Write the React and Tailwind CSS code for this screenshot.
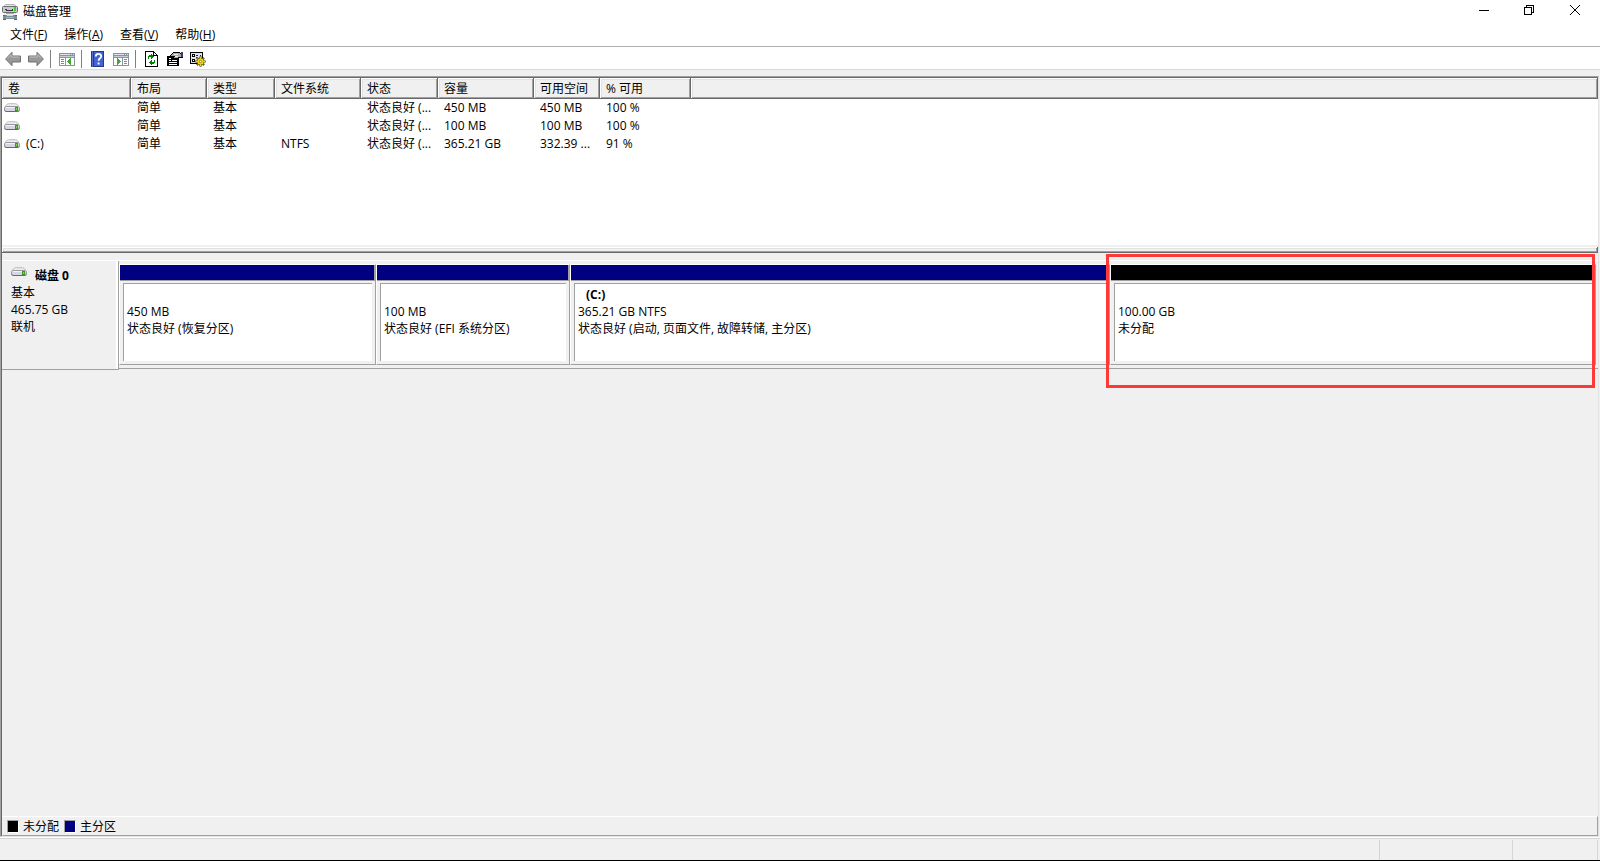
const columns = [
  { label: '卷', width: 'w-[129px]' },
  { label: '布局', width: 'w-[76px]' },
  { label: '类型', width: 'w-[68px]' },
  { label: '文件系统', width: 'w-[86px]' },
  { label: '状态', width: 'w-[77px]' },
  { label: '容量', width: 'w-[96px]' },
  { label: '可用空间', width: 'w-[66px]' },
  { label: '% 可用', width: 'w-[91px]' },
];

const volumes = [
  ['', '简单', '基本', '', '状态良好 (...', '450 MB', '450 MB', '100 %'],
  ['', '简单', '基本', '', '状态良好 (...', '100 MB', '100 MB', '100 %'],
  ['(C:)', '简单', '基本', 'NTFS', '状态良好 (...', '365.21 GB', '332.39 ...', '91 %'],
];

const partitions = [
  { name: '', size: '450 MB', status: '状态良好 (恢复分区)', bar: 'bg-[#000080]' },
  { name: '', size: '100 MB', status: '状态良好 (EFI 系统分区)', bar: 'bg-[#000080]' },
  { name: '(C:)', size: '365.21 GB NTFS', status: '状态良好 (启动, 页面文件, 故障转储, 主分区)', bar: 'bg-[#000080]' },
  { name: '', size: '100.00 GB', status: '未分配', bar: 'bg-black', marked: true },
];

const menus = [
  ['文件', 'F'],
  ['操作', 'A'],
  ['查看', 'V'],
  ['帮助', 'H'],
];

const DriveIcon = () => (
  <svg width="16" height="10" viewBox="0 0 16 10" className="shrink-0">
    <path d="M4 1h8l3 3H1z" fill="#ededee" />
    <path d="M1.5 3Q3 .7 4.5.7h7q1.5 0 3 2.3" fill="none" stroke="#bcbcbe" />
    <path d="M1.5 3.5h13q1 .5 1 1.5v2q0 1.5-1.5 1.5h-12Q.5 8.500 .5 7V5q0-1 1-1.500z" fill="#d6d6e2" stroke="#99999d" />
    <path d="M1 7.500q.5 1 1.500 1h11q1 0 1.500-1" fill="none" stroke="#68686c" />
    <path d="M2 4.500h9" stroke="#f2f2f8" />
    <rect x="11" y="4" width="3" height="4" fill="#3f9a22" />
    <rect x="12" y="5" width="1" height="2" fill="#74dc3c" />
  </svg>
);

const AppIcon = () => (
  <svg width="16" height="16" viewBox="0 0 16 16" className="shrink-0">
    <path d="M3.500.5h9l2.500 3H1z" fill="#e6e6e7" stroke="#b4b4b6" />
    <rect x=".5" y="2.500" width="15" height="6" rx="1" fill="#c9cacc" stroke="#6d7072" />
    <path d="M4 6.500h7M3 5.500h2M10 5.500h1" stroke="#34383a" />
    <rect x="12" y="3" width="2" height="4" fill="#35d51e" />
    <path d="M2 9h12v3H2z" fill="#eceeee" />
    <path d="M4 9.500h8" stroke="#a5a9ac" />
    <rect x="1" y="11" width="14" height="4" fill="#7d9097" />
    <path d="M1 11.500h2M13 11.500h2M1 15.500h3M12 15.500h3" stroke="#56656a" />
    <path d="M5 11.500h6" stroke="#cfd6d8" />
    <path d="M4 13.500h8" stroke="#a9b8bd" />
  </svg>
);

const ArrowIcon = ({ flip }) => (
  <svg width="16" height="16" viewBox="0 0 16 16" className={flip ? '-scale-x-100' : ''}>
    <path d="M.6 8 7 1.300v3.700h8.500v6H7v3.700z" fill="#989898" stroke="#707070" strokeLinejoin="round" />
    <path d="M2.200 7.600 6.200 3.600v2.400h8.300" fill="none" stroke="#bcbcbc" />
  </svg>
);

const PaneIcon = ({ right }) => (
  <svg width="16" height="14" viewBox="0 0 16 14" shapeRendering="crispEdges">
    <path d="M0 1h16v13H0z" fill="#8a93a3" />
    <path d="M1 2h10v1H1zM12 2h1v1h-1zM14 2h1v1h-1z" fill="#dfe4ea" />
    <path d="M1 4h14v1H1z" fill="#c8ced8" />
    {right ? (
      <>
        <path d="M1 6h8v7H1zM10 6h5v7h-5z" fill="#fff" />
        <path d="M11 7h3v1h-3zM11 9h3v1h-3zM11 11h3v1h-3z" fill="#6e8ab5" />
        <path d="M4 6h1v1h1v1h1v1h1v1H7v1H6v1H5v1H4z" fill="#45a832" />
      </>
    ) : (
      <>
        <path d="M1 6h5v7H1zM7 6h8v7H7z" fill="#fff" />
        <path d="M2 7h3v1H2zM2 9h3v1H2zM2 11h3v1H2z" fill="#6e8ab5" />
        <path d="M12 6h-1v1h-1v1H9v1H8v1h1v1h1v1h1v1h1z" fill="#45a832" />
      </>
    )}
  </svg>
);

const HelpIcon = () => (
  <svg width="13" height="16" viewBox="0 0 13 16">
    <rect width="13" height="16" fill="#23399a" />
    <path d="M3 1h9v14H3z" fill="#4164cf" />
    <path d="M1.500 0v16" stroke="#5570c8" />
    <path d="M4.800 5.400c0-3.200 5.400-3.200 5.400-.2 0 2.200-2.600 2-2.600 4.600" fill="none" stroke="#fff" strokeWidth="1.800" />
    <rect x="6.600" y="11.500" width="2" height="2" fill="#fff" />
  </svg>
);

const RefreshIcon = () => (
  <svg width="13" height="16" viewBox="0 0 13 16" shapeRendering="crispEdges">
    <path d="M.5.5h8l4 4v11H.5z" fill="#fff" stroke="#000" />
    <path d="M8.500.5v4h4" fill="none" stroke="#000" />
    <path d="M6 3h1v1h1v1h1v1H8v1H7v1H6V6H4v2H3V5h1V4h2z" fill="#008000" />
    <path d="M7 14H6v-1H5v-1H4v-1h1v-1h1V9h1v2h2V9h1v3H9v1H7z" fill="#008000" />
  </svg>
);

const PropertiesIcon = () => (
  <svg width="16" height="16" viewBox="0 0 16 16" shapeRendering="crispEdges">
    <path d="M0 5h12v10H0z" />
    <path d="M2 7h2v1H2zM5 9h5v1H5zM2 9h2v1H2zM2 11h8v1H2zM2 13h8v1H2z" fill="#fff" />
    <path d="M3 5l4-4h5l1 1h2v4h-3l-2 2-1-1-2 1-1-1 2-2z" fill="#aaa" stroke="#000" />
    <path d="M7 3h4M8 5h3" stroke="#eee" />
    <path d="M14 1h2v5h-2z" fill="#333b70" />
  </svg>
);

const SettingsIcon = () => (
  <svg width="16" height="16" viewBox="0 0 16 16">
    <path d="M.5 1.500h12v11H.5z" fill="#e4e4e4" stroke="#000" shapeRendering="crispEdges" />
    <path d="M2.500 3.500h2v2h-2zM2.500 8.500h2v2h-2z" fill="#fff" stroke="#000" shapeRendering="crispEdges" />
    <path d="M6 4.500h2M10 4.500h1M6 6.500h1" stroke="#222" shapeRendering="crispEdges" />
    <path d="M10.500 5.500v10M5.500 10.500h10M7 7l7 7M14 7l-7 7" stroke="#000" strokeWidth="2" />
    <path d="M10.500 6v9M6 10.500h9M7.500 7.500l6 6M13.500 7.500l-6 6" stroke="#f5d800" strokeWidth="1.300" />
    <circle cx="10.500" cy="10.500" r="2.800" fill="#f5d800" />
    <circle cx="10.500" cy="10.500" r="1.200" fill="#fff" stroke="#5a4d00" strokeWidth=".6" />
  </svg>
);

const ToolButton = ({ label, children }) => (
  <button aria-label={label} className="flex h-full w-[23px] items-center justify-center">
    {children}
  </button>
);

const Separator = () => <span className="mr-1 ml-[3px] h-[18px] w-px bg-[#808080]" />;

const TitleBar = () => (
  <header className="flex h-6 items-center bg-white pl-0.5">
    <AppIcon />
    <h1 className="ml-[5px] flex-1">磁盘管理</h1>
    <div className="flex h-5 items-center self-start pr-0.5">
      <button aria-label="最小化" className="flex w-[45px] justify-center">
        <svg width="10" height="10" shapeRendering="crispEdges"><path d="M0 5.500h10" stroke="#000" /></svg>
      </button>
      <button aria-label="还原" className="flex w-[45px] justify-center">
        <svg width="10" height="10" shapeRendering="crispEdges" fill="none" stroke="#000">
          <path d="M.5 2.500h7v7h-7zM2.500 2.500v-2h7v7h-2" />
        </svg>
      </button>
      <button aria-label="关闭" className="flex w-[47px] justify-center">
        <svg width="10" height="10"><path d="M0 0l10 10M10 0L0 10" stroke="#000" /></svg>
      </button>
    </div>
  </header>
);

const MenuBar = () => (
  <nav className="flex h-[23px] items-center gap-px border-b border-[#b0b0b0] bg-white pl-0.5">
    {menus.map(([label, key]) => (
      <button key={key} className="px-2">
        {label}(<u>{key}</u>)
      </button>
    ))}
  </nav>
);

const Toolbar = () => (
  <div className="flex h-[23px] items-center border-b border-[#d9d9d9] bg-white pt-0.5 pl-px">
    <ToolButton label="后退"><ArrowIcon /></ToolButton>
    <ToolButton label="前进"><ArrowIcon flip /></ToolButton>
    <Separator />
    <ToolButton label="显示/隐藏控制台树"><PaneIcon /></ToolButton>
    <Separator />
    <ToolButton label="帮助"><HelpIcon /></ToolButton>
    <ToolButton label="显示/隐藏操作窗格"><PaneIcon right /></ToolButton>
    <Separator />
    <ToolButton label="刷新"><RefreshIcon /></ToolButton>
    <ToolButton label="属性"><PropertiesIcon /></ToolButton>
    <ToolButton label="设置"><SettingsIcon /></ToolButton>
  </div>
);

const headCell =
  'h-[21px] bg-[#f0f0f0] px-1.5 text-left font-normal shadow-[inset_-1px_-1px_#696969,inset_1px_1px_#fff,inset_-2px_-2px_#a0a0a0,inset_2px_2px_#e3e3e3]';

const VolumeTable = () => (
  <div className="h-[167px] bg-white">
    <table className="w-full table-fixed border-collapse whitespace-nowrap">
      <thead>
        <tr>
          {columns.map((col) => (
            <th key={col.label} className={`${headCell} ${col.width}`}>{col.label}</th>
          ))}
          <td className={headCell} />
        </tr>
      </thead>
      <tbody>
        {volumes.map((row, i) => (
          <tr key={i} className="h-[18px]">
            {row.map((cell, j) => (
              <td key={j} className={j === 0 ? 'pl-0.5' : 'pl-1.5'}>
                {j === 0 ? (
                  <div className="flex items-center gap-1.5"><DriveIcon />{cell}</div>
                ) : cell}
              </td>
            ))}
          </tr>
        ))}
      </tbody>
    </table>
  </div>
);

const Partition = ({ name, size, status, bar, marked }) => (
  <div className="relative flex flex-col border border-t-white border-r-[#a0a0a0] border-b-[#a0a0a0] border-l-white">
    <div className="border-b border-[#a0a0a0] bg-[#a0a0a0] pr-px">
      <div className={`h-[15px] ${bar}`} />
    </div>
    <div className="mx-[3px] mt-0.5 mb-[3px] flex-1 overflow-hidden border-t border-l border-[#a0a0a0] bg-white px-[3px] pt-0.5 leading-[17px] whitespace-nowrap">
      <p className="h-[17px] pl-2 font-bold">{name}</p>
      <p>{size}</p>
      <p>{status}</p>
    </div>
    {marked && <div className="absolute -top-[11px] -left-[5px] right-0 h-[134px] border-3 border-[#ff3838]" />}
  </div>
);

const DiskRow = () => (
  <section className="mt-[7px] flex border-t border-white">
    <div className="h-[109px] w-[117px] border-r border-b border-[#a0a0a0]">
      <div className="h-full border-r-2 border-white pt-1.5 pl-[9px] leading-[17px]">
        <h2 className="flex items-start gap-2 font-bold"><DriveIcon />磁盘 0</h2>
        <p>基本</p>
        <p>465.75 GB</p>
        <p>联机</p>
      </div>
    </div>
    <div className="h-[108px] flex-1 border-b border-[#a0a0a0] pt-[3px] pr-0.5">
      <div className="grid h-[101px] grid-cols-[257fr_194fr_540fr_486fr]">
        {partitions.map((part) => (
          <Partition key={part.size} {...part} />
        ))}
      </div>
    </div>
  </section>
);

const LegendItem = ({ color, label }) => (
  <span className="flex items-center gap-1">
    <i className={`h-[13px] w-3 border-t border-r border-b border-l border-t-[#a0a0a0] border-r-white border-b-white border-l-[#a0a0a0] ${color}`} />
    {label}
  </span>
);

const App = () => (
  <div className="flex min-h-screen flex-col border-b border-black bg-[#f0f0f0] font-['Open_Sans','Noto_Sans_CJK_SC',sans-serif] text-[12px] leading-4 text-black">
    <TitleBar />
    <MenuBar />
    <Toolbar />

    <main className="mt-1.5 mr-px flex flex-1 flex-col border border-t-[#a0a0a0] border-r-[#e3e3e3] border-b-[#e3e3e3] border-l-[#a0a0a0]">
      <div className="flex flex-1 flex-col border-t border-l border-[#696969]">
        <VolumeTable />
        <div className="mt-0.5 h-1.5 shadow-[inset_-1px_-1px_#696969,inset_1px_1px_#fff,inset_-2px_-2px_#a0a0a0,inset_2px_2px_#e3e3e3]" />
        <DiskRow />
        <div className="flex-1" />
        <div className="flex h-5 items-center gap-[5px] border border-t-white border-r-[#a0a0a0] border-b-[#a0a0a0] border-l-transparent pt-px pl-1">
          <LegendItem color="bg-black" label="未分配" />
          <LegendItem color="bg-[#000080]" label="主分区" />
        </div>
      </div>
    </main>

    <footer className="flex h-[23px] justify-end border-t border-white">
      <div className="flex flex-1 justify-end border-t border-[#d5d5d5] pt-px pr-0.5">
        <div className="w-[133px] border-l border-[#d5d5d5]" />
        <div className="w-[86px] border-x border-[#d5d5d5]" />
      </div>
    </footer>
  </div>
);

export default App;
